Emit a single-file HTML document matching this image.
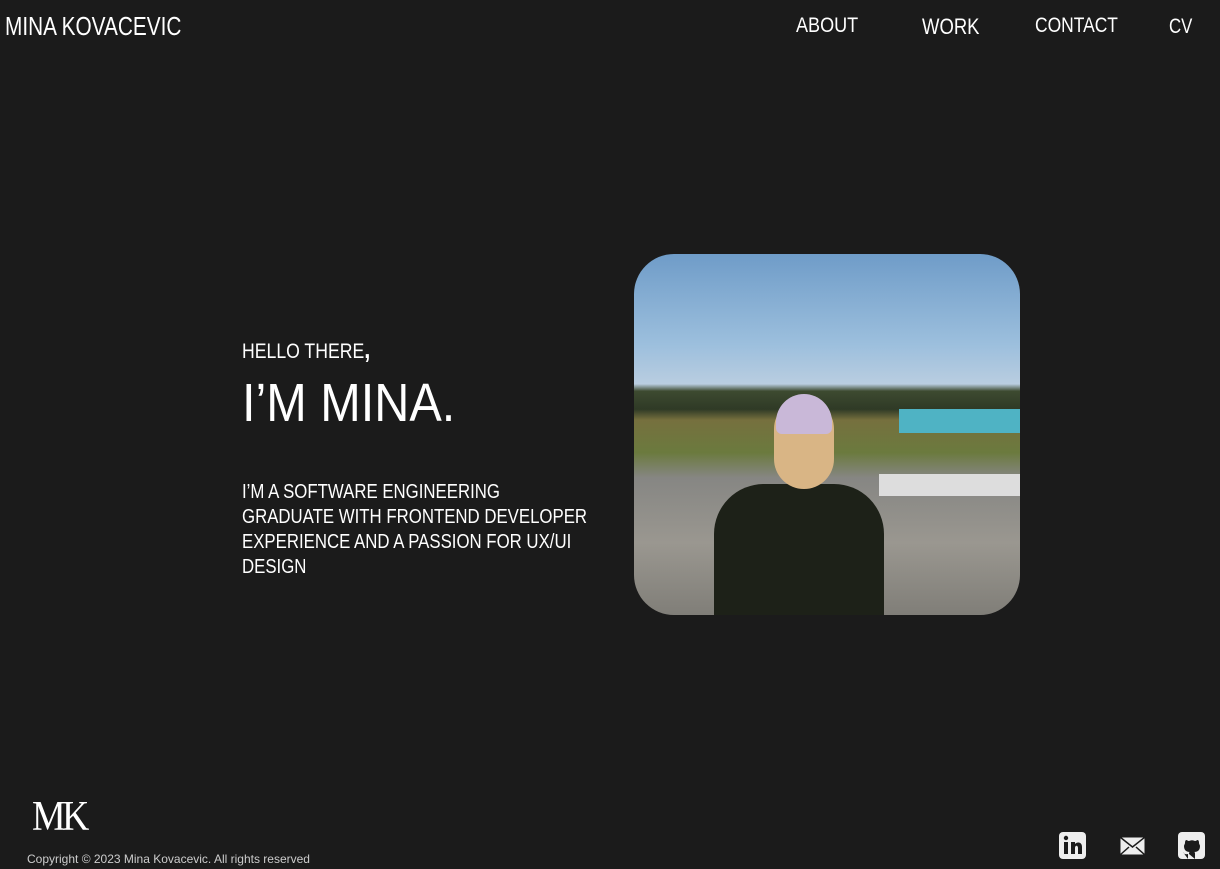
<!DOCTYPE html>
<html><head><style>
body{margin:0;width:1220px;height:869px;background:#1b1b1b;color:#fff;font-family:"Liberation Sans",sans-serif;position:relative;overflow:hidden}
.a{position:absolute;white-space:nowrap}
.n{transform-origin:left top;transform:scaleX(0.82)}
</style></head><body>
<div class="a n" style="left:5px;top:11px;font-size:26px;transform:scaleX(0.8)">MINA KOVACEVIC</div>
<div class="a n" style="left:796px;top:14px;font-size:21px;transform:scaleX(0.86)">ABOUT</div>
<div class="a n" style="left:922px;top:14px;font-size:22px;transform:scaleX(0.84)">WORK</div>
<div class="a n" style="left:1035px;top:14px;font-size:21px;transform:scaleX(0.83)">CONTACT</div>
<div class="a n" style="left:1169px;top:15px;font-size:21px;transform:scaleX(0.8)">CV</div>
<div class="a n" style="left:242px;top:334px;font-size:21px;transform:scaleX(0.84)">HELLO THERE<b style="font-size:26px">,</b></div>
<div class="a n" style="left:242px;top:372px;font-size:54px;transform:scaleX(0.9)">I’M MINA.</div>
<div class="a n" style="left:242px;top:480px;font-size:20px;line-height:25px;transform:scaleX(0.84)">I’M A SOFTWARE ENGINEERING<br>GRADUATE WITH FRONTEND DEVELOPER<br>EXPERIENCE AND A PASSION FOR UX/UI<br>DESIGN</div>
<div class="a" style="left:634px;top:254px;width:386px;height:361px;border-radius:40px;overflow:hidden;background:linear-gradient(#6f9cc8 0%,#9cbfdd 25%,#b9cde0 36%,#3d4a30 38%,#2f3a26 43%,#76703e 46%,#6b7a3e 55%,#868683 62%,#9a9790 80%,#807e78 100%)">
<div class="a" style="left:80px;top:230px;width:170px;height:140px;background:#1d2118;border-radius:50px 50px 0 0"></div>
<div class="a" style="left:140px;top:145px;width:60px;height:90px;background:#d9b585;border-radius:30px"></div>
<div class="a" style="left:142px;top:140px;width:56px;height:40px;background:#c9b8d8;border-radius:28px 28px 6px 6px"></div>
<div class="a" style="left:265px;top:155px;width:121px;height:24px;background:#4fb3c4"></div>
<div class="a" style="left:245px;top:220px;width:141px;height:22px;background:#ddd"></div>
</div>
<div class="a n" style="left:32px;top:793px;font-family:'Liberation Serif',serif;font-size:42px;letter-spacing:-4px;transform:scaleX(0.9)">ΜK</div>
<div class="a" style="left:27px;top:852px;font-size:12px;color:#ccc">Copyright © 2023 Mina Kovacevic. All rights reserved</div>
<svg class="a" style="left:1059px;top:832px" width="27" height="27" viewBox="0 0 27 27"><rect width="27" height="27" rx="4" fill="#eee"/><rect x="5" y="10" width="4" height="12" fill="#1b1b1b"/><circle cx="7" cy="6" r="2.2" fill="#1b1b1b"/><path d="M12 10h4v2c1-2 7-3 7 3v7h-4v-6c0-3-3-3-3 0v6h-4z" fill="#1b1b1b"/></svg>
<svg class="a" style="left:1119px;top:836px" width="27" height="20" viewBox="0 0 27 20"><rect x="1" y="1" width="25" height="18" fill="#eee" stroke="#1b1b1b"/><path d="M1 1l12.5 10L26 1M1 19l9-8M26 19l-9-8" stroke="#1b1b1b" stroke-width="1.5" fill="none"/></svg>
<svg class="a" style="left:1178px;top:832px" width="27" height="27" viewBox="0 0 27 27"><rect width="27" height="27" rx="4" fill="#eee"/><path d="M10 27v-5c-4 1-5-2-5-2 M17 27v-5c0-1 0-2-1-2 4 0 6-2 6-6 0-1-1-2-1-3 0-1 0-2-1-3-1 0-2 1-3 1-2-1-4-1-6 0-1 0-2-1-3-1-1 1-1 2-1 3 0 1-1 2-1 3 0 4 2 6 6 6-1 0-1 1-1 2" fill="#1b1b1b"/></svg>
</body></html>
